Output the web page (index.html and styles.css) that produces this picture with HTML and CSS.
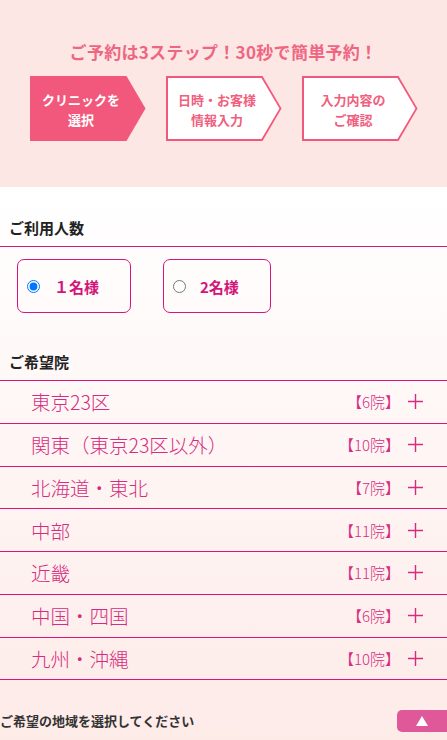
FILE: index.html
```html
<!DOCTYPE html>
<html lang="ja">
<head>
    <meta charset="UTF-8">
    <meta name="viewport" content="width=device-width, initial-scale=1.0">
    <title>ご予約</title>
    <link rel="stylesheet" href="styles.css">
</head>
<body>
    <header class="steps-head">
        <p class="steps-title">ご予約は3ステップ！30秒で簡単予約！</p>
        <ol class="steps">
            <li class="step step-active"><span class="step-inner">クリニックを<br>選択</span></li>
            <li class="step"><span class="step-inner">日時・お客様<br>情報入力</span></li>
            <li class="step"><span class="step-inner">入力内容の<br>ご確認</span></li>
        </ol>
    </header>

    <main class="form">
        <h2 class="form-heading">ご利用人数</h2>
        <div class="people">
            <label class="people-option">
                <input type="radio" name="people" value="1" checked>
                <span class="people-label">１名様</span>
            </label>
            <label class="people-option">
                <input type="radio" name="people" value="2">
                <span class="people-label">2名様</span>
            </label>
        </div>

        <h2 class="form-heading form-heading-second">ご希望院</h2>
        <ul id="areas" class="areas"></ul>

        <div class="select-bar">
            <p class="select-text">ご希望の地域を選択してください</p>
            <button type="button" class="select-btn" aria-label="閉じる"></button>
        </div>
    </main>

    <script>
        const areas = [
            ['東京23区', 6],
            ['関東（東京23区以外）', 10],
            ['北海道・東北', 7],
            ['中部', 11],
            ['近畿', 11],
            ['中国・四国', 6],
            ['九州・沖縄', 10]
        ];

        const list = document.getElementById('areas');
        areas.forEach(([name, count]) => {
            const li = document.createElement('li');
            li.className = 'area';
            li.innerHTML =
                '<span class="area-name">' + name + '</span>' +
                '<span class="area-count">【' + count + '院】</span>' +
                '<svg class="area-plus" width="15" height="15" viewBox="0 0 15 15">' +
                '<path d="M7.5 0v15M0 7.5h15" stroke="currentColor" stroke-width="1.4" fill="none"/></svg>';
            list.appendChild(li);
        });
    </script>
</body>
</html>
```

FILE: styles.css
```css
body {
    margin: 0;
    font-family: "Noto Sans CJK JP", "Noto Sans", sans-serif;
    background-color: #fdeae7;
    color: #222;
}

/* steps header */
.steps-head {
    background-color: #fde7e4;
    height: 187px;
    box-sizing: border-box;
    padding-top: 40px;
}

.steps-title {
    margin: 0 0 12px;
    text-align: center;
    font-size: 17px;
    line-height: 24px;
    font-weight: bold;
    letter-spacing: 0.3px;
    color: #ef6682;
}

.steps {
    list-style: none;
    margin: 0;
    padding: 0;
    display: flex;
    justify-content: center;
    gap: 20px;
}

.step {
    width: 116px;
    height: 65px;
    box-sizing: border-box;
    padding: 2px;
    background-color: #f2587c;
    clip-path: polygon(0 0, calc(100% - 19px) 0, 100% 50%, calc(100% - 19px) 100%, 0 100%);
}

.step-inner {
    height: 100%;
    display: flex;
    align-items: center;
    justify-content: center;
    padding-right: 13px;
    padding-top: 2px;
    box-sizing: border-box;
    background-color: #fff;
    clip-path: polygon(0 0, calc(100% - 18px) 0, 100% 50%, calc(100% - 18px) 100%, 0 100%);
    text-align: center;
    font-size: 13px;
    line-height: 20px;
    font-weight: bold;
    color: #f0607e;
}

.step-active .step-inner {
    background-color: transparent;
    color: #fff;
}

/* form */
.form {
    min-height: 553px;
    box-sizing: border-box;
    padding-top: 30px;
    padding-bottom: 8px;
    background: linear-gradient(#ffffff, #fdebe8);
}

.form-heading {
    margin: 0;
    padding: 0 0 7px 9px;
    font-size: 15px;
    line-height: 22px;
    font-weight: bold;
    color: #222;
    border-bottom: 1px solid #d9147b;
}

.form-heading-second {
    margin-top: 38px;
}

.people {
    display: flex;
    gap: 32px;
    padding: 12px 0 0 17px;
}

.people-option {
    display: flex;
    align-items: center;
    height: 54px;
    box-sizing: border-box;
    padding: 0 31px 0 9px;
    border: 1px solid #d9147b;
    border-radius: 7px;
    cursor: pointer;
}

.people-option input {
    width: 13px;
    height: 13px;
    margin: 0 14px 0 0;
}

.people-label {
    font-size: 15px;
    font-weight: bold;
    color: #d3157a;
}

.areas {
    list-style: none;
    margin: 0;
    padding: 0;
}

.area {
    display: flex;
    align-items: center;
    height: 41.75px;
    padding: 0 24px 0 31px;
    border-bottom: 1px solid #d9147b;
    color: #d62c80;
}

.area-name {
    flex: 1;
    font-size: 19.5px;
    font-weight: 300;
}

.area-count {
    font-size: 15px;
    font-weight: 300;
    margin-right: 8px;
}

.area-plus {
    display: block;
}

.select-bar {
    display: flex;
    align-items: center;
    justify-content: space-between;
    margin-top: 30px;
}

.select-text {
    margin: 0;
    font-size: 13px;
    line-height: 22px;
    font-weight: bold;
    color: #333;
}

.select-btn {
    width: 50px;
    height: 22px;
    border: none;
    border-radius: 5px 0 0 5px;
    background-color: #df5899;
    display: flex;
    align-items: center;
    justify-content: center;
    cursor: pointer;
}

.select-btn::before {
    content: "";
    border-left: 6px solid transparent;
    border-right: 6px solid transparent;
    border-bottom: 10px solid #fff;
}
```
